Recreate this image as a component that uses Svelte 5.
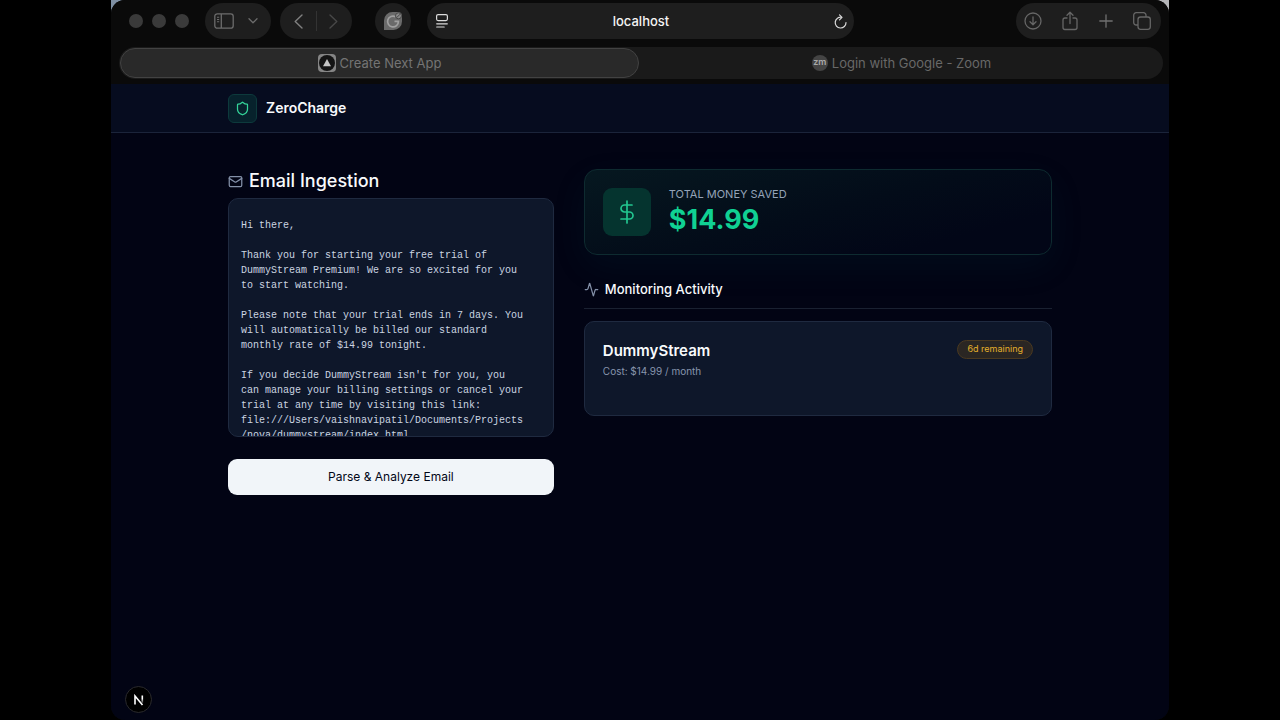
<script>
  let email = $state(`
Hi there,

Thank you for starting your free trial of
DummyStream Premium! We are so excited for you
to start watching.

Please note that your trial ends in 7 days. You
will automatically be billed our standard
monthly rate of $14.99 tonight.

If you decide DummyStream isn't for you, you
can manage your billing settings or cancel your
trial at any time by visiting this link:
file:///Users/vaishnavipatil/Documents/Projects
/nova/dummystream/index.html`);
</script>

<div class="desktop">
  <div class="window">
    <header class="chrome">
      <div class="toolbar">
        <div class="lights"><i></i><i></i><i></i></div>
        <div class="pill side">
          <button aria-label="Show sidebar">
            <svg width="20" height="16" viewBox="0 0 20 16" fill="none" stroke="#6c6c6c" stroke-width="1.3"><rect x=".8" y=".8" width="18.4" height="14.4" rx="2.5" /><path d="M7.3 1v14" /><path d="M3 4.2h2.2M3 6.5h2.2M3 8.8h2.2" stroke-width="1.1" /></svg>
          </button>
          <button aria-label="Sidebar options">
            <svg width="10" height="6" viewBox="0 0 10 6" fill="none" stroke="#6c6c6c" stroke-width="1.3" stroke-linecap="round" stroke-linejoin="round"><path d="M1 .8l4 4 4-4" /></svg>
          </button>
        </div>
        <div class="pill nav">
          <button aria-label="Back">
            <svg width="9" height="15" viewBox="0 0 9 15" fill="none" stroke="#808080" stroke-width="1.4" stroke-linecap="round" stroke-linejoin="round"><path d="M8 1L1.2 7.5 8 14" /></svg>
          </button>
          <span class="split"></span>
          <button aria-label="Forward">
            <svg width="9" height="15" viewBox="0 0 9 15" fill="none" stroke="#484848" stroke-width="1.4" stroke-linecap="round" stroke-linejoin="round"><path d="M1 1l6.8 6.5L1 14" /></svg>
          </button>
        </div>
        <button class="pill ext" aria-label="Extension">
          <svg width="20" height="20" viewBox="0 0 20 20" fill="none"><path d="M1 19V9.500A8.500 8.500 0 0 1 9.500 1H15a4 4 0 0 1 4 4v5.500A8.500 8.500 0 0 1 10.500 19z" fill="#6a6a6a" /><path d="M12.500 5.700A5.400 5.400 0 1 0 15.400 10.400H11.500" stroke="#a0a0a0" stroke-width="1.700" /><circle cx="15.500" cy="4.800" r="3" fill="#888" stroke="#484848" /><path d="M13.800 6.500l3.400-3.400" stroke="#484848" /></svg>
        </button>
        <div class="pill address">
          <button aria-label="Page menu">
            <svg width="12" height="14" viewBox="0 0 12 14" fill="none" stroke="#dcdcdc" stroke-width="1.200" stroke-linecap="round"><rect x=".6" y=".6" width="10.800" height="6" rx="1.500" /><path d="M.7 9.800h10.600M.7 13h7.500" /></svg>
          </button>
          <input aria-label="Address" value="localhost" />
          <button aria-label="Reload">
            <svg width="13" height="15" viewBox="0 0 13 15" fill="none" stroke="#dcdcdc" stroke-width="1.200" stroke-linecap="round" stroke-linejoin="round"><path d="M7.700 3.300A5.400 5.400 0 1 0 12 8.500M5.500 .9l2.500 2.500-2.500 2.500" /></svg>
          </button>
        </div>
        <div class="pill actions">
          <button aria-label="Downloads">
            <svg width="18" height="18" viewBox="0 0 18 18" fill="none" stroke="#666" stroke-width="1.300" stroke-linecap="round" stroke-linejoin="round"><circle cx="9" cy="9" r="8" /><path d="M9 5v7.500M6 9.800l3 3 3-3" /></svg>
          </button>
          <button aria-label="Share">
            <svg width="16" height="20" viewBox="0 0 16 20" fill="none" stroke="#666" stroke-width="1.300" stroke-linecap="round" stroke-linejoin="round"><path d="M5 7H3a2 2 0 0 0-2 2v7.500a2 2 0 0 0 2 2h10a2 2 0 0 0 2-2V9a2 2 0 0 0-2-2h-2M8 12.500V1.500M5 4.300l3-3 3 3" /></svg>
          </button>
          <button aria-label="New tab">
            <svg width="14" height="14" viewBox="0 0 14 14" stroke="#707070" stroke-width="1.300" stroke-linecap="round"><path d="M7 .8v12.400M.8 7h12.400" /></svg>
          </button>
          <button aria-label="Tab overview">
            <svg width="18" height="18" viewBox="0 0 18 18" fill="none" stroke="#666" stroke-width="1.300" stroke-linejoin="round"><rect x="5" y="5" width="12.300" height="12.300" rx="2.500" /><path d="M5 13H3.200A2.500 2.500 0 0 1 .7 10.500V3.200A2.500 2.500 0 0 1 3.200.7h7.300A2.500 2.500 0 0 1 13 3.200V5" /></svg>
          </button>
        </div>
      </div>
      <nav class="tabs" aria-label="Tabs">
        <button class="tab current">
          <svg width="18" height="18" viewBox="0 0 18 18"><rect width="18" height="18" rx="4" fill="#858585" /><circle cx="9" cy="9" r="8" fill="#141414" /><path d="M9 5l4 7.200H5z" fill="#c4c4c4" /></svg>
          Create Next App
        </button>
        <button class="tab">
          <span class="zm">zm</span>
          Login with Google - Zoom
        </button>
      </nav>
    </header>

    <div class="site">
      <header class="topbar">
        <div class="container brand">
          <span class="logo">
            <svg width="15" height="15" viewBox="0 0 24 24" fill="none" stroke="#34d399" stroke-width="2" stroke-linecap="round" stroke-linejoin="round"><path d="M20 13c0 5-3.500 7.500-7.660 8.950a1 1 0 0 1-.67-.01C7.500 20.500 4 18 4 13V6a1 1 0 0 1 1-1c2 0 4.500-1.200 6.240-2.720a1.170 1.170 0 0 1 1.520 0C14.510 3.810 17 5 19 5a1 1 0 0 1 1 1z" /></svg>
          </span>
          <strong>ZeroCharge</strong>
        </div>
      </header>

      <main class="container columns">
        <section class="ingest">
          <h1>
            <svg width="15" height="15" viewBox="0 0 24 24" fill="none" stroke="#8390a8" stroke-width="2" stroke-linecap="round" stroke-linejoin="round"><rect x="2" y="4" width="20" height="16" rx="2" /><path d="m22 7-8.970 5.700a1.940 1.940 0 0 1-2.060 0L2 7" /></svg>
            <label for="email">Email Ingestion</label>
          </h1>
          <textarea id="email" spellcheck="false" bind:value={email}></textarea>
          <button class="parse">Parse &amp; Analyze Email</button>
        </section>

        <section class="status">
          <div class="saved">
            <span class="dollar">
              <svg width="24" height="24" viewBox="0 0 24 24" fill="none" stroke="#22c58f" stroke-width="1.700" stroke-linecap="round" stroke-linejoin="round"><path d="M12 1v22M17 5H9.500a3.500 3.500 0 0 0 0 7h5a3.500 3.500 0 0 1 0 7H6" /></svg>
            </span>
            <div class="total">
              <p class="caption">TOTAL MONEY SAVED</p>
              <p class="amount">$14.99</p>
            </div>
          </div>
          <h2>
            <svg width="15" height="15" viewBox="0 0 24 24" fill="none" stroke="#8390a8" stroke-width="2" stroke-linecap="round" stroke-linejoin="round"><path d="M22 12h-2.480a2 2 0 0 0-1.930 1.460l-2.350 8.360a.25.25 0 0 1-.48 0L9.240 2.180a.25.25 0 0 0-.48 0l-2.350 8.360A2 2 0 0 1 4.490 12H2" /></svg>
            Monitoring Activity
          </h2>
          <article class="service">
            <div>
              <h3>DummyStream</h3>
              <p>Cost: $14.99 / month</p>
            </div>
            <span class="badge">6d remaining</span>
          </article>
        </section>
      </main>

      <button class="devtools" aria-label="Next.js tools">
        <svg width="12" height="12" viewBox="0 0 12 12" fill="none" stroke-width="1.600"><defs><linearGradient id="fade" x1="0" y1="0" x2="0" y2="1"><stop offset=".4" stop-color="#fff" /><stop offset="1" stop-color="#fff" stop-opacity=".2" /></linearGradient></defs><path d="M2 10.500V2L9.500 11" stroke="#fff" /><rect x="8.500" y="1.500" width="1.600" height="7.500" fill="url(#fade)" /></svg>
      </button>
    </div>
  </div>
</div>

<style>
  :global(body) { margin: 0; background: #000; }
  * { box-sizing: border-box; }
  h1, h2, h3, p { margin: 0; }
  button { font: inherit; color: inherit; border: 0; padding: 0; background: none; display: flex; align-items: center; justify-content: center; }
  svg { flex: none; display: block; }

  .desktop {
    min-height: 100vh;
    padding: 0 111px;
    background: linear-gradient(90deg, #7f90a4, #b5b5b8) content-box no-repeat 0 0 / 100% 20px, #000;
    display: flex;
    font-family: Inter, "Liberation Sans", sans-serif;
  }
  .window { flex: 1; min-width: 0; display: flex; flex-direction: column; background: #0a0a0a; border-radius: 14px; overflow: hidden; }
  .chrome { padding: 3px 6px 5px 8px; background: #0a0a0a; display: flex; flex-direction: column; gap: 8px; }
  .toolbar { display: flex; align-items: center; padding: 0 2px 0 10px; }
  .lights { display: flex; gap: 9px; margin-right: 16px; }
  .lights i { width: 14px; height: 14px; border-radius: 50%; background: #3a3a3a; }
  .pill { height: 36px; border-radius: 18px; background: #1e1e1e; display: flex; align-items: center; }
  .side { width: 66px; justify-content: space-between; padding: 0 13px 0 9px; margin-right: 9px; }
  .nav { width: 72px; justify-content: space-between; padding: 0 14px; margin-right: 23px; }
  .split { width: 1px; height: 20px; background: #333; }
  .ext { width: 36px; margin-right: 16px; }
  .address { flex: 0 1 427px; padding: 0 7px 0 9px; }
  .address input { flex: 1; min-width: 0; border: 0; background: none; color: #f4f4f4; text-align: center; font: 500 13px/18px Inter, sans-serif; outline: 0; }
  .actions { width: 145px; margin-left: auto; padding: 0 10px 0 8px; justify-content: space-between; }

  .tabs { display: flex; height: 32px; border-radius: 16px; background: #1a1a1a; }
  .tab { flex: 1 1 0; gap: 4px; border-radius: 16px; font-size: 13px; line-height: 18px; color: #686868; }
  .current { flex: 0 0 auto; width: calc(50% - 3px); margin: 1px; border: 1px solid #424242; background: #292929; color: #747474; }
  .zm { width: 16px; height: 16px; border-radius: 50%; background: #444; color: #aaa; font-size: 9px; line-height: 14px; font-weight: 600; text-align: center; }

  .site { flex: 1; position: relative; background: #020414; color: #f8fafc; }
  .container { max-width: 860px; margin: 0 auto; padding: 0 18px; }
  .topbar { background: #060c1f; border-bottom: 1px solid #1b243a; }
  .brand { display: flex; align-items: center; gap: 9px; height: 48px; }
  .logo { width: 29px; height: 29px; border-radius: 6px; border: 1px solid #0d3a3c; background: #07222c; display: grid; place-items: center; }
  .brand strong { font-size: 14px; line-height: 20px; font-weight: 600; }

  .columns { display: grid; grid-template-columns: repeat(12, minmax(0, 1fr)); column-gap: 30px; padding-top: 36px; padding-bottom: 36px; }
  .ingest { grid-column: span 5; display: flex; flex-direction: column; }
  .status { grid-column: span 7; }
  h1 { display: flex; align-items: center; gap: 6px; font-size: 18px; line-height: 24px; font-weight: 500; margin-bottom: 5px; }
  textarea { height: 239px; resize: none; overflow: hidden; margin: 0; padding: 4px 12px 0; white-space: pre; border: 1px solid #1f2a40; border-radius: 10px; background: #0e172a; color: #cbd5e1; font: 10px/15px "Liberation Mono", monospace; outline: 0; }
  .parse { height: 36px; margin-top: 22px; border-radius: 9px; background: #f1f5f9; color: #020617; font-size: 12px; line-height: 18px; font-weight: 400; }

  .saved { display: flex; align-items: center; gap: 18px; height: 86px; padding: 0 18px; border: 1px solid #0e2b30; border-radius: 13px; background: linear-gradient(165deg, #061820, #030c19 50%, #020617 80%); box-shadow: 0 12px 36px rgb(16 120 110 / 8%); }
  .dollar { width: 48px; height: 48px; border-radius: 9px; background: #05342f; display: grid; place-items: center; }
  .total { display: grid; gap: 1px; }
  .caption { font-size: 11px; line-height: 15px; color: #94a3b8; }
  .amount { font-size: 27px; line-height: 34px; font-weight: 700; color: #10d193; }
  h2 { display: flex; align-items: center; gap: 6px; margin: 22px 0 12px; padding: 2px 0 9px; border-bottom: 1px solid #1a2131; font-size: 13px; line-height: 20px; font-weight: 500; }
  .service { display: flex; justify-content: space-between; align-items: flex-start; min-height: 95px; padding: 18px; border: 1px solid #1f2a40; border-radius: 10px; background: #0e172a; }
  h3 { font-size: 15px; line-height: 22px; font-weight: 600; }
  .service p { font-size: 10px; line-height: 18px; color: #8795ad; }
  .badge { padding: 1px 9px 2px; border: 1px solid #4a3920; border-radius: 10px; background: #2a2623; color: #e5b02c; font-size: 9px; line-height: 14px; font-weight: 400; }
  .devtools { position: absolute; left: 14px; bottom: 7px; width: 27px; height: 27px; border-radius: 50%; background: #000; border: 1px solid #2a2a2e; }
</style>
